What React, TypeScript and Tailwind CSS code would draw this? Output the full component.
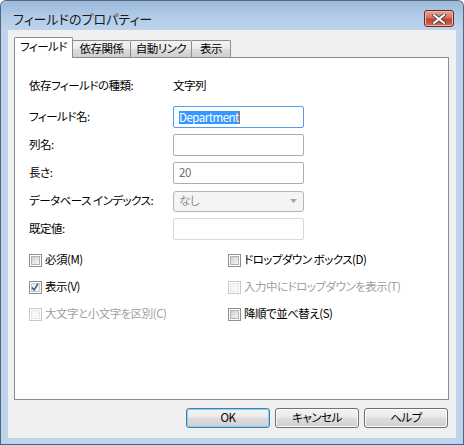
import type { ReactNode } from "react";

const font = "font-['Noto_Sans_CJK_JP','Noto_Sans',sans-serif] [font-feature-settings:'palt']";

function Field({ label, children }: { label: string; children: ReactNode }) {
  return (
    <div className="flex items-center h-[22px]">
      <span className="w-[144px] shrink-0">{label}</span>
      {children}
    </div>
  );
}

function Box({
  children,
  focused,
  disabled,
}: {
  children?: ReactNode;
  focused?: boolean;
  disabled?: boolean;
}) {
  let border = "border-[#abadb3]";
  if (focused) border = "border-[#569de5]";
  if (disabled) border = "border-[#d9d9d9]";
  return (
    <div
      className={`w-[131px] h-[22px] border rounded-[2px] bg-white flex items-center px-[5px] ${border}`}
    >
      {children}
    </div>
  );
}

function Check({
  label,
  checked,
  disabled,
}: {
  label: string;
  checked?: boolean;
  disabled?: boolean;
}) {
  return (
    <div className={`flex items-center h-[20px] gap-[3px] ${disabled ? "text-[#a0a0a0]" : ""}`}>
      <span
        className={`relative w-[13px] h-[13px] border flex items-center justify-center bg-white ${
          disabled ? "border-[#c8c8c8]" : "border-[#8e8f8f]"
        }`}
      >
        <span
          className={`w-[9px] h-[9px] border ${
            disabled
              ? "border-[#e6e6e6] bg-[#f7f7f7]"
              : checked
              ? "border-[#c8ccd2] bg-[linear-gradient(135deg,#e4e6e9,#fbfbfb)]"
              : "border-[#aeb3b9] bg-[linear-gradient(135deg,#cbcfd5,#f6f6f6)]"
          }`}
        />
        {checked && (
          <svg viewBox="0 0 13 13" className="absolute inset-0 w-[11px] h-[11px]">
            <path
              d="M2.5 6.5 L4.8 9.5 L9.5 1.8"
              fill="none"
              stroke="#3c5594"
              strokeWidth="1.8"
              strokeLinejoin="round"
            />
          </svg>
        )}
      </span>
      <span>{label}</span>
    </div>
  );
}

function Button({ children, isDefault }: { children: ReactNode; isDefault?: boolean }) {
  return (
    <button
      className={`w-[84px] h-[20px] rounded-[3px] border leading-none text-black bg-[linear-gradient(#f2f2f2_0%,#ebebeb_45%,#dddddd_50%,#cfcfcf_100%)] ${
        isDefault
          ? "border-[#3c7fb1] shadow-[inset_0_0_0_1px_#8fd0ef]"
          : "border-[#707070] shadow-[inset_0_0_0_1px_#fbfbfb]"
      }`}
    >
      {children}
    </button>
  );
}

export default function App() {
  return (
    <div
      className={`w-[464px] h-[445px] flex flex-col border border-[#55667a] border-b-[#2a6c8a] rounded-t-[6px] bg-[#bed4ed] text-[11.5px] tracking-[-0.5px] text-black ${font}`}
    >
      {/* TITLE BAR */}
      <div className="h-[29px] shrink-0 flex items-center justify-between pt-[6px] pl-[12px] pr-[9px] rounded-t-[6px] bg-[linear-gradient(#9cb9da,#b4cde9_60%,#bed4ed)]">
        <span className="text-[13px] tracking-normal text-[#1a1a1a]">フィールドのプロパティー</span>
        <div className="w-[30px] h-[17px] rounded-[3px] border border-[#6d2a22] bg-[linear-gradient(#e8a89d,#d4705f_45%,#c2432f_55%,#d16a52)] shadow-[inset_0_0_0_1px_#eab6ac] flex items-center justify-center">
          <svg viewBox="0 0 14 10" className="w-[14px] h-[10px]">
            <path
              d="M2 1 L12 9 M12 1 L2 9"
              stroke="#4a3a3a"
              strokeWidth="3.6"
              strokeLinecap="square"
            />
            <path
              d="M2 1 L12 9 M12 1 L2 9"
              stroke="#ffffff"
              strokeWidth="2"
              strokeLinecap="square"
            />
          </svg>
        </div>
      </div>

      {/* CLIENT */}
      <div className="mx-[7px] mb-[6px] flex-1 bg-[#f0f0f0] flex flex-col pt-[7px] pl-[6px] pr-[7px]">
        {/* TABS */}
        <div className="flex items-end h-[20px]">
          <div className="relative z-10 -mb-px w-[59px] h-[21px] bg-white border border-b-0 border-[#898c95] rounded-t-[2px] flex items-center justify-center pb-[2px]">
            フィールド
          </div>
          <div className="w-[58px] h-[17px] border border-l-0 border-b-0 border-[#898c95] rounded-tr-[2px] bg-[linear-gradient(#f3f3f3,#ebebeb_50%,#dddddd_50%,#cfcfcf)] flex items-center justify-center">
            依存関係
          </div>
          <div className="w-[61px] h-[17px] border border-l-0 border-b-0 border-[#898c95] rounded-tr-[2px] bg-[linear-gradient(#f3f3f3,#ebebeb_50%,#dddddd_50%,#cfcfcf)] flex items-center justify-center">
            自動リンク
          </div>
          <div className="w-[39px] h-[17px] border border-l-0 border-b-0 border-[#898c95] rounded-tr-[2px] bg-[linear-gradient(#f3f3f3,#ebebeb_50%,#dddddd_50%,#cfcfcf)] flex items-center justify-center">
            表示
          </div>
        </div>

        {/* PANEL */}
        <div className="h-[343px] bg-white border border-[#898c95] pl-[14px] pt-[17px] flex flex-col">
          <Field label="依存フィールドの種類:">
            <span>文字列</span>
          </Field>

          <div className="mt-[9px] flex flex-col gap-[6px]">
            <Field label="フィールド名:">
              <Box focused>
                <span className="bg-[#3399ff] text-white leading-[13px]">Department</span>
                <span className="w-px h-[13px] bg-[#d46a1a]" />
              </Box>
            </Field>
            <Field label="列名:">
              <Box />
            </Field>
            <Field label="長さ:">
              <Box>
                <span className="text-[#6d6d6d]">20</span>
              </Box>
            </Field>
            <Field label="データベース インデックス:">
              <div className="w-[131px] h-[21px] border border-[#b2b6ba] rounded-[3px] bg-[#f4f4f4] flex items-center justify-between px-[5px]">
                <span className="text-[#8d8d8d]">なし</span>
                <svg viewBox="0 0 7 4" className="w-[7px] h-[4px] mr-[1px]">
                  <path d="M0 0 H7 L3.5 4 Z" fill="#a6a6a6" />
                </svg>
              </div>
            </Field>
            <Field label="既定値:">
              <Box disabled />
            </Field>
          </div>

          {/* CHECKBOXES */}
          <div className="mt-[10px] grid grid-cols-[199px_1fr] gap-y-[7px]">
            <Check label="必須(M)" />
            <Check label="ドロップダウン ボックス(D)" />
            <Check label="表示(V)" checked />
            <Check label="入力中にドロップダウンを表示(T)" disabled />
            <Check label="大文字と小文字を区別(C)" disabled />
            <Check label="降順で並べ替え(S)" />
          </div>
        </div>

        {/* BUTTONS */}
        <div className="mt-[8px] flex justify-end gap-[5px] pr-[1px]">
          <Button isDefault>OK</Button>
          <Button>キャンセル</Button>
          <Button>ヘルプ</Button>
        </div>
      </div>
    </div>
  );
}
